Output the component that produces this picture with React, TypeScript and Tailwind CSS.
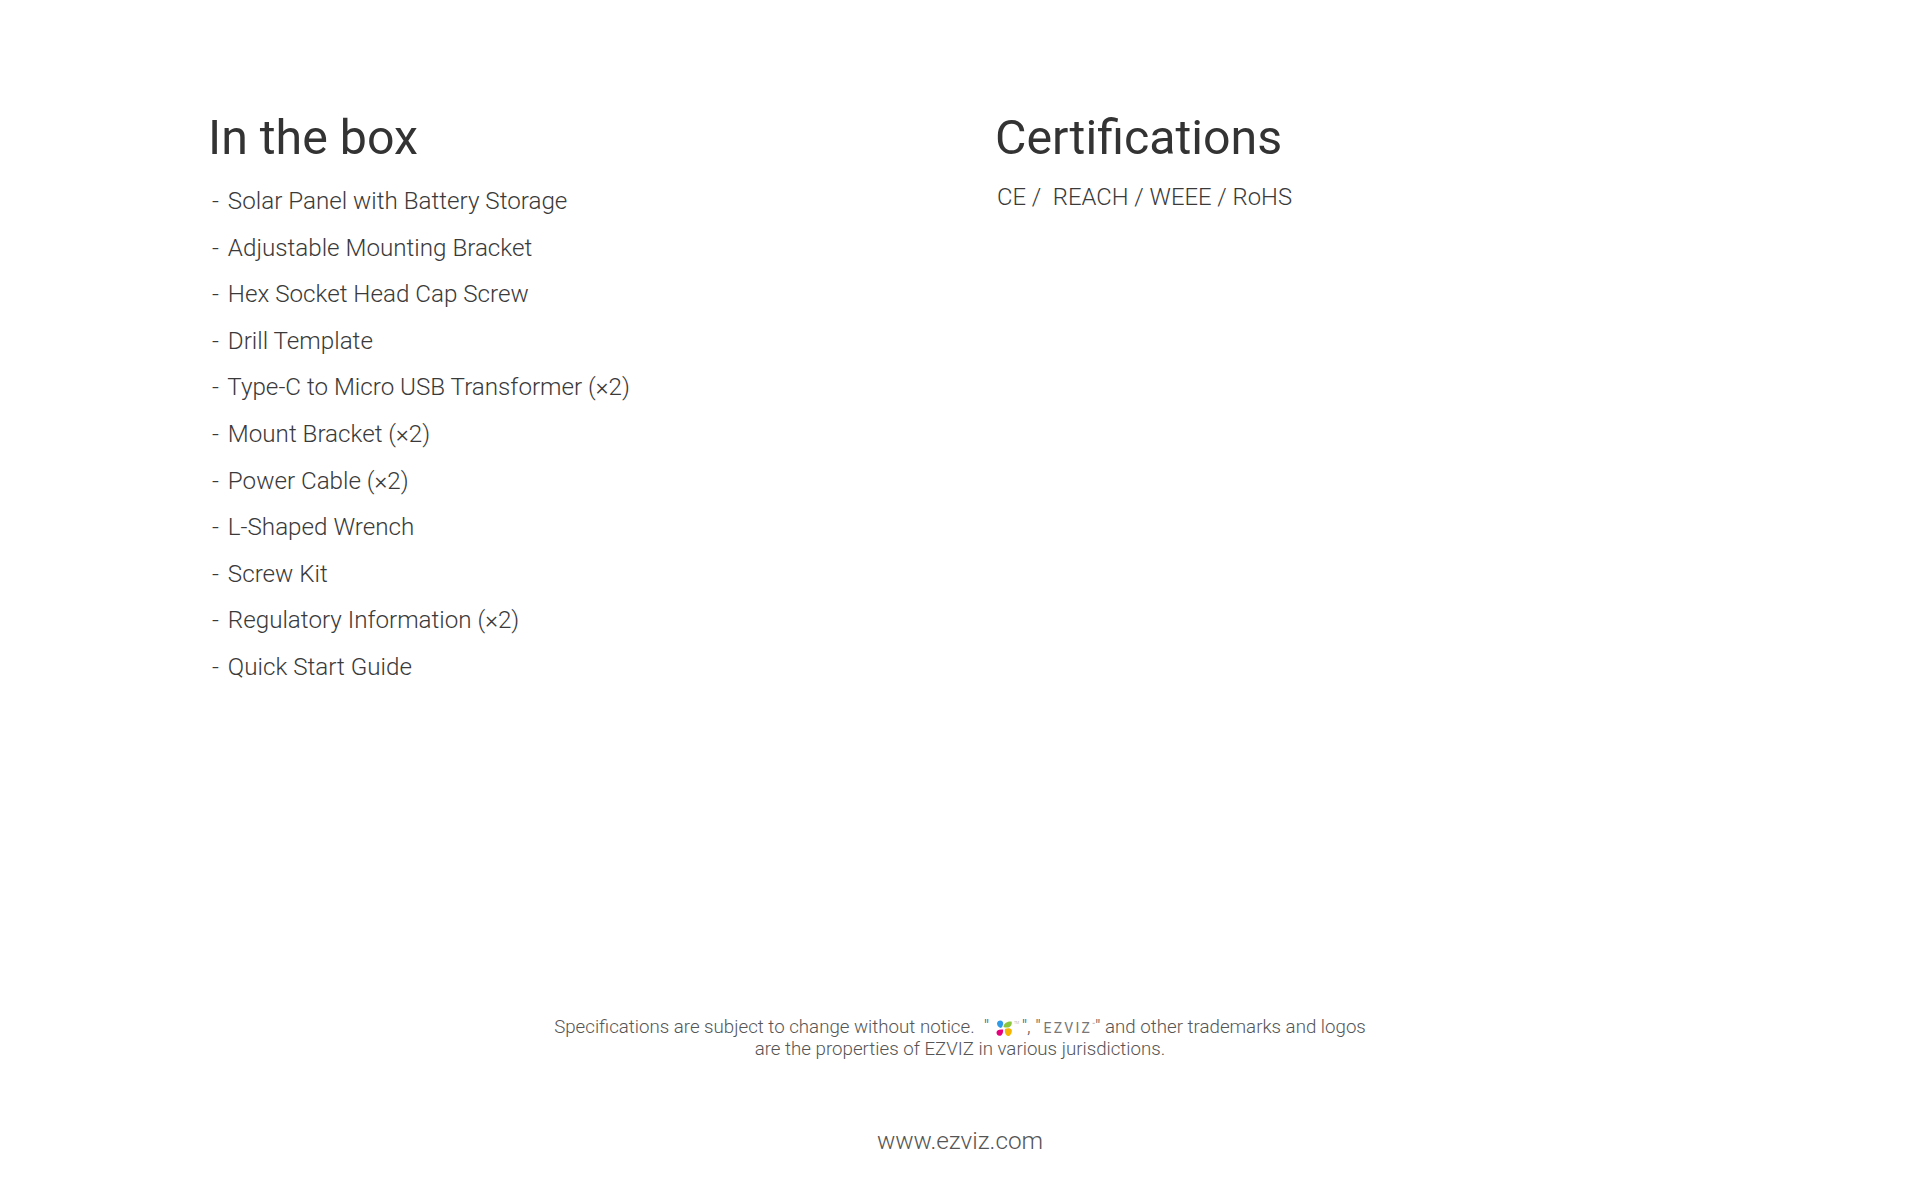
const items = [
  "Solar Panel with Battery Storage",
  "Adjustable Mounting Bracket",
  "Hex Socket Head Cap Screw",
  "Drill Template",
  "Type-C to Micro USB Transformer (×2)",
  "Mount Bracket (×2)",
  "Power Cable (×2)",
  "L-Shaped Wrench",
  "Screw Kit",
  "Regulatory Information (×2)",
  "Quick Start Guide",
];

function FlowerLogo() {
  return (
    <svg width="24" height="17" viewBox="0 0 24 17" className="-mt-2 mx-[2px] inline-block align-[-4px]">
      <path d="M1 3.5 C1 0.5 5 -0.5 6.5 1.5 C8 3.5 6.5 7 5 8 C3 7.5 1 6 1 3.5Z" fill="#2f9be8" />
      <path d="M7.5 7 C7.5 3.5 11 1 15.5 1.5 C16.5 4 15 7 12 7.5 C10.5 7.8 9 7.5 7.5 7Z" fill="#8cc63f" />
      <path d="M0.5 12.5 C0.5 10 3.5 9 7 9.5 C7.5 12.5 6 16 3.5 15.8 C1.5 15.5 0.5 14.5 0.5 12.5Z" fill="#e6007e" />
      <path d="M9 9 C11 8 15 8 15.8 10 C16.2 13 14 16.5 12 16 C9.5 15.5 8.5 12 9 9Z" fill="#f8b500" />
      <text x="18" y="3.5" fontSize="3.5" fill="#999">TM</text>
    </svg>
  );
}

export default function App() {
  return (
    <div className="flex h-[1200px] flex-col bg-white font-['Roboto',sans-serif] font-light text-[#3a3a3a]">
      <div className="flex pl-[208px] pt-[106px]">
        <section className="w-[787px]">
          <h2 className="text-[48.3px] leading-[64px] font-normal text-[#333333]">In the box</h2>
          <ul className="mt-[8px] ml-[4px] text-[24.2px] leading-[46.6px]">
            {items.map((item) => (
              <li key={item}>
                <span className="mr-[3px]">-</span> {item}
              </li>
            ))}
          </ul>
        </section>
        <section>
          <h2 className="text-[48.3px] leading-[64px] font-normal text-[#333333]">Certifications</h2>
          <p className="mt-[4px] ml-[2px] text-[23.8px] leading-[46px] whitespace-pre">CE /  REACH / WEEE / RoHS</p>
        </section>
      </div>
      <footer className="mt-auto flex flex-col items-center pb-[44px] text-[#555555]">
        <p className="text-center text-[18.7px] leading-[22px] whitespace-pre">
          Specifications are subject to change without notice.  " <FlowerLogo />", "
          <span className="ml-[3px] text-[14px] leading-[12px] font-normal tracking-[2.2px] text-[#777777]">EZVIZ</span>
          <span className="align-super text-[5px] leading-[5px]">™</span>" and other trademarks and logos
          <br />
          are the properties of EZVIZ in various jurisdictions.
        </p>
        <p className="mt-[66px] text-[24.3px] leading-[30px]">www.ezviz.com</p>
      </footer>
    </div>
  );
}
